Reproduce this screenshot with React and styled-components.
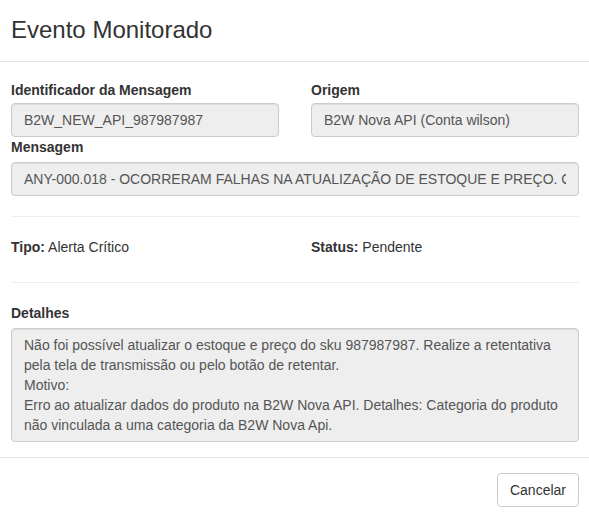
import React from 'react'
import styled, { createGlobalStyle } from 'styled-components'

const GlobalStyle = createGlobalStyle`
  html, body {
    margin: 0;
    padding: 0;
    background: #fff;
  }
  body {
    font-family: "Liberation Sans", Arial, sans-serif;
    font-size: 14px;
    line-height: 20px;
    color: #333;
  }
  * { box-sizing: border-box; }
`

const Modal = styled.div`
  width: 589px;
  background: #fff;
`

const ModalHeader = styled.div`
  padding: 13px 11px 14px 11px;
  border-bottom: 1px solid #e5e5e5;
`

const ModalTitle = styled.h4`
  margin: 0;
  font-size: 24px;
  font-weight: normal;
  line-height: 34px;
  color: #333;
`

const ModalBody = styled.div`
  padding: 18px 10px 15px 11px;
`

const Row = styled.div`
  display: grid;
  grid-template-columns: 1fr 1fr;
  column-gap: 32px;
`

const Field = styled.div`
  display: flex;
  flex-direction: column;
`

const Label = styled.label`
  display: block;
  font-weight: bold;
  margin-bottom: ${p => p.$gap || 5}px;
`

const Input = styled.input`
  display: block;
  width: 100%;
  height: 34px;
  padding: 6px 12px;
  font-family: inherit;
  font-size: 14px;
  line-height: 20px;
  color: #555;
  background: #eee;
  border: 1px solid #ccc;
  border-radius: 4px;
  box-shadow: inset 0 1px 1px rgba(0, 0, 0, 0.075);
  outline: none;
`

const Rule = styled.hr`
  margin: 20px 0;
  border: 0;
  border-top: 1px solid #eee;
  height: 0;
`

const Info = styled.div`
  padding-bottom: 5px;
`

const Details = styled.div`
  padding: 6px 12px;
  color: #555;
  background: #eee;
  border: 1px solid #ccc;
  border-radius: 4px;
  box-shadow: inset 0 1px 1px rgba(0, 0, 0, 0.075);
  line-height: 20px;
`

const ModalFooter = styled.div`
  display: flex;
  justify-content: flex-end;
  padding: 15px 10px 15px 11px;
  border-top: 1px solid #e5e5e5;
`

const Button = styled.button`
  height: 34px;
  padding: 6px 12px;
  font-family: inherit;
  font-size: 14px;
  line-height: 20px;
  color: #333;
  background: #fff;
  border: 1px solid #ccc;
  border-radius: 4px;
  cursor: pointer;
`

const App = () => {
  return <>
    <GlobalStyle />
    <Modal>
      <ModalHeader>
        <ModalTitle>Evento Monitorado</ModalTitle>
      </ModalHeader>
      <ModalBody>
        <Row>
          <Field>
            <Label $gap={3}>Identificador da Mensagem</Label>
            <Input readOnly value="B2W_NEW_API_987987987" />
          </Field>
          <Field>
            <Label $gap={3}>Origem</Label>
            <Input readOnly value="B2W Nova API (Conta wilson)" />
          </Field>
        </Row>
        <Field>
          <Label>Mensagem</Label>
          <Input readOnly value="ANY-000.018 - OCORRERAM FALHAS NA ATUALIZAÇÃO DE ESTOQUE E PREÇO. CONSULTE OS DETALHES." />
        </Field>

        <Rule />

        <Row>
          <Info><strong>Tipo:</strong> Alerta Crítico</Info>
          <Info><strong>Status:</strong> Pendente</Info>
        </Row>

        <Rule />

        <Field>
          <Label>Detalhes</Label>
          <Details>
            Não foi possível atualizar o estoque e preço do sku 987987987. Realize a retentativa pela tela de transmissão ou pelo botão de retentar.<br />
            Motivo:<br />
            Erro ao atualizar dados do produto na B2W Nova API. Detalhes: Categoria do produto não vinculada a uma categoria da B2W Nova Api.
          </Details>
        </Field>
      </ModalBody>
      <ModalFooter>
        <Button>Cancelar</Button>
      </ModalFooter>
    </Modal>
  </>
}

export default App
